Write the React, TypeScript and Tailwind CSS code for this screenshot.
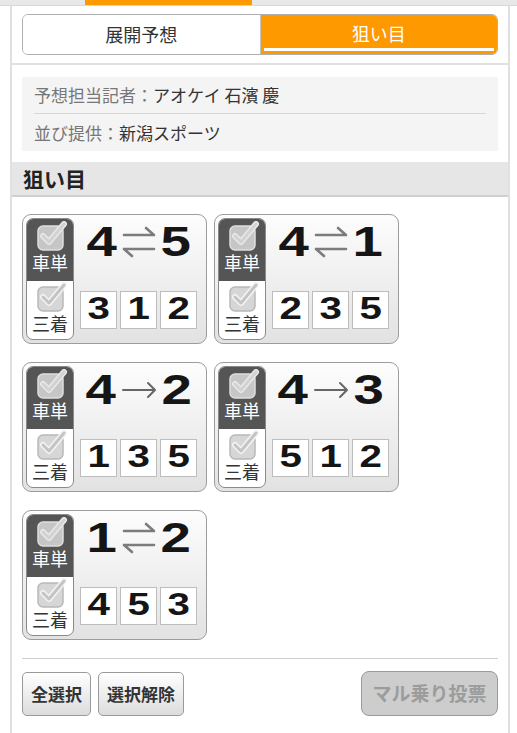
import React from "react";

const jp = { fontFamily: "'Noto Sans CJK JP', 'Noto Sans', sans-serif" };
const num = { fontFamily: "'Liberation Sans', Arial, sans-serif" };

type Pick = { a: string; b: string; both: boolean; third: string[] };

const picks: Pick[] = [
  { a: "4", b: "5", both: true, third: ["3", "1", "2"] },
  { a: "4", b: "1", both: true, third: ["2", "3", "5"] },
  { a: "4", b: "2", both: false, third: ["1", "3", "5"] },
  { a: "4", b: "3", both: false, third: ["5", "1", "2"] },
  { a: "1", b: "2", both: true, third: ["4", "5", "3"] },
];

const CheckIcon: React.FC<{ dark?: boolean }> = ({ dark }) => (
  <svg width="34" height="30" viewBox="0 0 34 30">
    <rect
      x="3"
      y="5"
      width="25"
      height="24"
      rx="5"
      fill={dark ? "#c6c6c6" : "#d6d6d6"}
      stroke={dark ? "#dedede" : "#b8b8b8"}
      strokeWidth="1.5"
    />
    <path
      d="M8 15 L14 21 L29 3"
      fill="none"
      stroke={dark ? "#e8e8e8" : "#f4f4f4"}
      strokeWidth="6"
      strokeLinecap="round"
      strokeLinejoin="round"
    />
    <path
      d="M8 15 L14 21 L29 3"
      fill="none"
      stroke={dark ? "#d2d2d2" : "#c4c4c4"}
      strokeWidth="3"
      strokeLinecap="round"
      strokeLinejoin="round"
    />
  </svg>
);

const Arrow: React.FC<{ both: boolean }> = ({ both }) =>
  both ? (
    <svg width="36" height="32" viewBox="0 0 36 32">
      <g fill="none" stroke="#7c7c7c" strokeWidth="2.6" strokeLinecap="round" strokeLinejoin="round">
        <path d="M3 9 H33 M25 2 L33 9" />
        <path d="M33 23 H3 M11 30 L3 23" />
      </g>
    </svg>
  ) : (
    <svg width="38" height="22" viewBox="0 0 38 22">
      <g fill="none" stroke="#666" strokeWidth="2" strokeLinecap="round" strokeLinejoin="round">
        <path d="M3 11 H35 M28 4 L35 11 L28 18" />
      </g>
    </svg>
  );

const Card: React.FC<{ pick: Pick }> = ({ pick }) => (
  <div className="flex h-[130px] w-[185px] gap-[6px] rounded-[9px] border border-[#9c9c9c] bg-linear-to-b from-[#fdfdfd] to-[#e2e2e2] p-[3px]">
    <div className="flex w-[48px] flex-col overflow-hidden rounded-[7px] border border-[#8a8a8a] bg-white">
      <div className="flex h-[62px] flex-col items-center bg-[#555555] pt-[2px]">
        <div className="ml-[4px]">
          <CheckIcon dark />
        </div>
        <span className="text-[18px] leading-[22px] text-white" style={jp}>
          車単
        </span>
      </div>
      <div className="flex flex-1 flex-col items-center pt-[1px]">
        <div className="ml-[4px]">
          <CheckIcon />
        </div>
        <span className="text-[18px] leading-[22px] text-[#333]" style={jp}>
          三着
        </span>
      </div>
    </div>
    <div className="flex flex-1 flex-col pr-[5px]">
      <div className="flex h-[48px] items-center justify-center gap-[4px]" style={num}>
        <span className="flex w-[30px] justify-center text-[42px] leading-none font-bold text-[#151515]">
          <span className="inline-block scale-x-[1.3]">{pick.a}</span>
        </span>
        <Arrow both={pick.both} />
        <span className="flex w-[30px] justify-center text-[42px] leading-none font-bold text-[#151515]">
          <span className="inline-block scale-x-[1.3]">{pick.b}</span>
        </span>
      </div>
      <div className="mt-[25px] flex gap-[3px]">
        {pick.third.map((n, i) => (
          <div
            key={i}
            className="flex h-[38px] w-[37px] items-center justify-center border border-[#bdbdbd] bg-white pb-[4px] text-[31px] leading-none font-bold text-[#151515]"
            style={num}
          >
            <span className="inline-block scale-x-[1.3]">{n}</span>
          </div>
        ))}
      </div>
    </div>
  </div>
);

export default function App() {
  return (
    <div className="min-h-screen w-[517px] bg-white" style={jp}>
      <div className="flex h-[6px] border-b border-[#d8d8d8] bg-[#e8e8e8]">
        <div className="w-[85px]" />
        <div className="h-[5px] w-[167px] bg-[#ff9900]" />
      </div>

      <div className="ml-[10px] w-[500px] border-x-2 border-[#e0e0e0] pb-[20px]">
        <div className="border-b-2 border-[#e0e0e0] px-[10px] pt-[8px] pb-[8px]">
          <div className="flex h-[41px] overflow-hidden rounded-[6px] border border-[#b0b0b0]">
            <div className="flex flex-1 items-center justify-center bg-white text-[18px] text-[#333]">
              展開予想
            </div>
            <div className="flex flex-1 flex-col border-l border-[#c4c4c4] bg-[#ff9900]">
              <div className="flex flex-1 items-center justify-center pt-[3px] text-[18px] text-white">
                狙い目
              </div>
              <div className="mx-[3px] mb-[3px] h-[3px] bg-white" />
            </div>
          </div>
        </div>

        <div className="px-[10px] pt-[12px]">
          <div className="bg-[#f4f4f4] px-[12px] text-[17px]">
            <div className="flex h-[37px] items-center border-b border-[#d8d8d8]">
              <span className="text-[#777]">予想担当記者：</span>
              <span className="text-[#333]">アオケイ 石濱 慶</span>
            </div>
            <div className="flex h-[37px] items-center">
              <span className="text-[#777]">並び提供：</span>
              <span className="text-[#333]">新潟スポーツ</span>
            </div>
          </div>
        </div>

        <div className="mt-[11px] flex h-[35px] items-center border-b-2 border-[#cfcfcf] bg-[#e6e6e6] px-[11px] text-[21px] font-bold text-[#222]">
          狙い目
        </div>

        <div className="grid grid-cols-[185px_185px] gap-x-[7px] gap-y-[18px] px-[10px] pt-[17px]">
          {picks.map((p, i) => (
            <Card key={i} pick={p} />
          ))}
        </div>

        <div className="mx-[10px] mt-[18px] border-t border-[#d0d0d0] pt-[12px]">
          <div className="flex items-center">
            <button className="h-[44px] w-[69px] rounded-[5px] border border-[#9a9a9a] bg-linear-to-b from-white to-[#dcdcdc] text-[17px] font-bold text-[#333]">
              全選択
            </button>
            <button className="ml-[7px] h-[44px] w-[86px] rounded-[5px] border border-[#9a9a9a] bg-linear-to-b from-white to-[#dcdcdc] text-[17px] font-bold text-[#333]">
              選択解除
            </button>
            <button className="ml-auto h-[45px] w-[137px] rounded-[8px] border border-[#9a9a9a] bg-[#cdcdcd] text-[19px] font-bold text-[#9c9c9c]">
              マル乗り投票
            </button>
          </div>
        </div>
      </div>
    </div>
  );
}
